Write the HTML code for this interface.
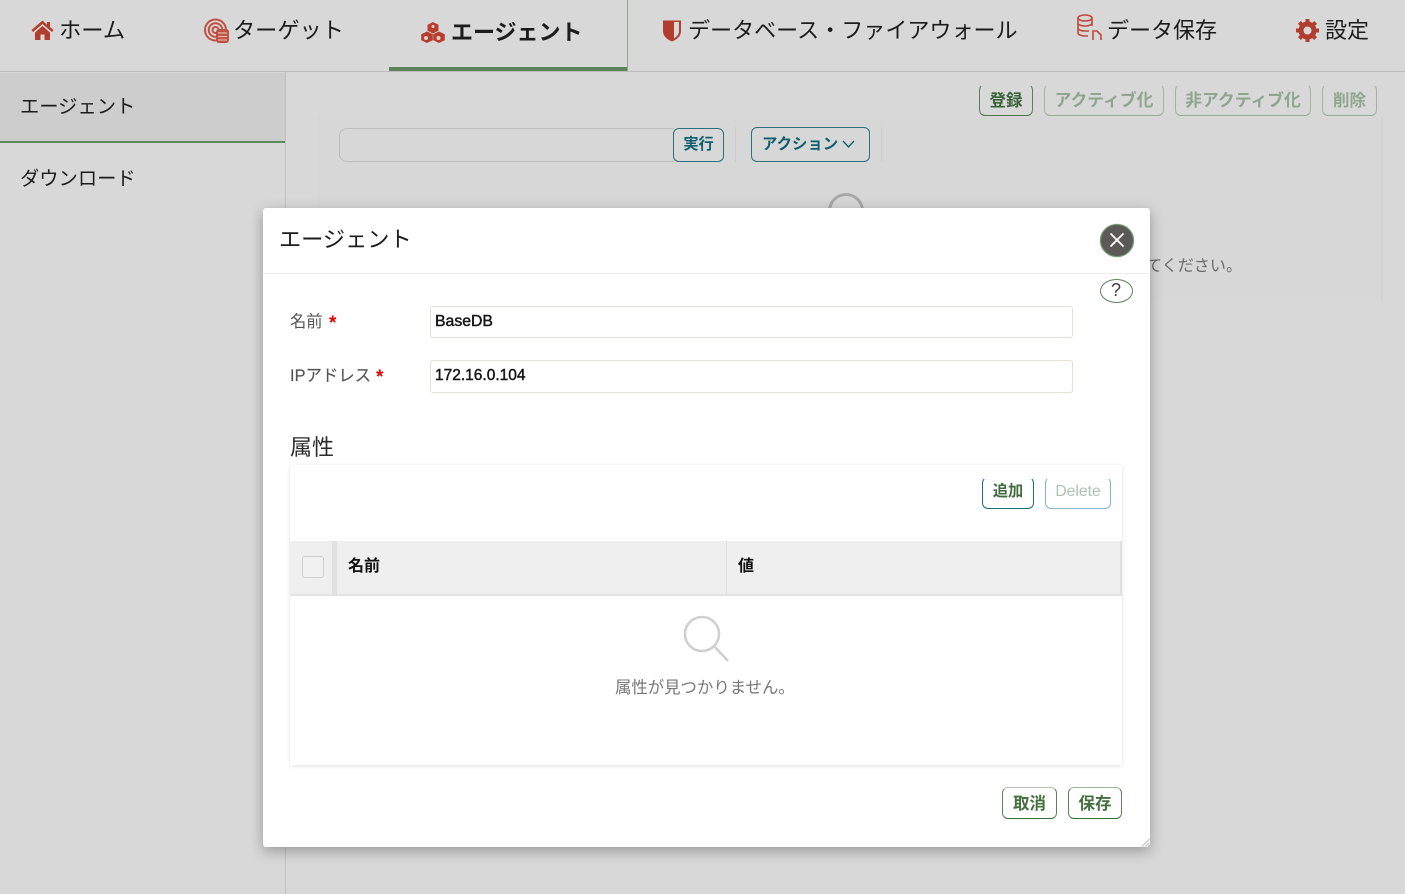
<!DOCTYPE html>
<html lang="ja"><head><meta charset="utf-8"><title>エージェント</title>
<style>
*{box-sizing:border-box}
html,body{margin:0;padding:0}
body{width:1405px;height:894px;overflow:hidden;position:relative;background:#d8d8d8;font-family:"Liberation Sans","Noto Sans CJK JP",sans-serif;color:#1c1c1c}
.t{position:absolute;white-space:nowrap;line-height:1}
.a{position:absolute}
.b{position:absolute;border:1px solid #85a085;border-radius:6px;font:bold 16px/1 "Liberation Sans","Noto Sans CJK JP",sans-serif;text-align:center;white-space:nowrap}
svg{position:absolute;overflow:visible}
</style></head><body>
<!-- nav -->
<div class="a" style="left:0;top:71px;width:1405px;height:1px;background:#bcbcbc"></div>
<div class="a" style="left:389px;top:67px;width:238px;height:4px;background:#5b8259"></div>
<div class="a" style="left:627px;top:0;width:1px;height:71px;background:#8ba58a"></div>
<svg style="left:31px;top:20px" width="23" height="20" viewBox="0 0 23 20"><path fill="#b23d2e" d="M11.500.5L.5 10l1.500 2 9.500-8 9.500 8 1.500-2-3.500-3V2h-3v2.700zM4 12.500L11.500 6 19 12.500V20h-5.500v-5.500h-4V20H4z"/></svg>
<span class="t" style="left:59px;top:20px;font-size:22.300px">ホーム</span>
<svg style="left:204px;top:18px" width="25" height="25" viewBox="0 0 25 25"><g fill="none" stroke="#c0503f" stroke-width="2"><circle cx="11.500" cy="12" r="10.500"/><circle cx="11.500" cy="12" r="6.800"/><circle cx="11.500" cy="12" r="3"/></g><rect x="12" y="11" width="13" height="14" rx="3" fill="#c0503f"/><path d="M14 15h9M14 18.500h9M14 22h9" stroke="#e0b8b0" stroke-width="1.200"/></svg>
<span class="t" style="left:233px;top:20px;font-size:22.200px">ターゲット</span>
<svg style="left:421px;top:22px" width="24" height="21" viewBox="0 0 24 21"><g fill="#b83f30"><path d="M12 0l5.500 2.700v6L12 11.500 6.500 8.700v-6z"/><path d="M6 9.500l5.800 2.700v6L6 21 .2 18.200v-6z"/><path d="M18 9.500l5.800 2.700v6L18 21l-5.800-2.800v-6z"/></g><g fill="#e6cfcb"><circle cx="12" cy="4.500" r="1.500"/><circle cx="5" cy="16" r="2"/><circle cx="17.500" cy="16" r="2"/></g></svg>
<span class="t" style="left:451px;top:22px;font-size:22px;font-weight:bold">エージェント</span>
<svg style="left:662px;top:19px" width="20" height="23" viewBox="0 0 20 23"><path fill="#b23d2e" d="M1 1.500h18V12c0 5-4 8.500-9 10.500C5 20.500 1 17 1 12z"/><path fill="#d8d8d8" d="M12 3h5v9c0 3-2 5.500-5 7.500z"/></svg>
<span class="t" style="left:688px;top:20px;font-size:22.050px">データベース・ファイアウォール</span>
<svg style="left:1077px;top:14px" width="26" height="26" viewBox="0 0 26 26"><g fill="none" stroke="#c0483a" stroke-width="1.600"><ellipse cx="8" cy="4" rx="7" ry="3"/><path d="M1 4v15c0 1.500 3 3 7 3h3M15 4v8M1 9c0 1.700 3 3 7 3s7-1.300 7-3M1 14c0 1.700 3 3 7 3h4"/><path d="M16 26v-9h4l4 4v5"/></g></svg>
<span class="t" style="left:1107px;top:20px;font-size:22px">データ保存</span>
<svg style="left:1296px;top:19px" width="23" height="23" viewBox="0 0 23 23"><circle cx="11.500" cy="11.500" r="6.500" fill="none" stroke="#b23d2e" stroke-width="5"/><g stroke="#b23d2e" stroke-width="4"><path d="M11.500 0v5M11.500 18v5M0 11.500h5M18 11.500h5M3.400 3.400l3.500 3.500M16.100 16.100l3.500 3.500M19.600 3.400l-3.500 3.500M6.900 16.100l-3.500 3.500"/></g></svg>
<span class="t" style="left:1325px;top:20px;font-size:22px">設定</span>
<!-- sidebar -->
<div class="a" style="left:285px;top:72px;width:1px;height:822px;background:#c0c0c0"></div>
<div class="a" style="left:0;top:73px;width:285px;height:68px;background:#cdcdcd"></div>
<div class="a" style="left:0;top:141px;width:285px;height:2px;background:#5f8a5e"></div>
<span class="t" style="left:20px;top:98px;font-size:19.300px">エージェント</span>
<span class="t" style="left:20px;top:170px;font-size:19.300px">ダウンロード</span>
<!-- background content -->
<div class="a" style="left:318px;top:116px;width:1065px;height:184px;background:#d7d7d7;border-right:2px solid #d2d2d2;border-left:1px solid #d4d4d4"></div>
<div class="b" style="left:979px;top:84px;width:54px;height:32px;line-height:32px;font-size:16.500px;color:#3a6238;border-color:transparent #5d7f5b #4d714b">登録</div>
<div class="b" style="left:1044px;top:84px;width:120px;height:32px;line-height:32px;font-size:16.800px;color:#8fa68e;border-color:transparent #a2b4a1 #94aa93">アクティブ化</div>
<div class="b" style="left:1175px;top:84px;width:136px;height:32px;line-height:32px;font-size:16.800px;color:#8fa68e;border-color:transparent #a2b4a1 #94aa93">非アクティブ化</div>
<div class="b" style="left:1322px;top:84px;width:55px;height:32px;line-height:32px;font-size:16.500px;color:#8fa68e;border-color:transparent #a2b4a1 #94aa93">削除</div>
<div class="a" style="left:339px;top:128px;width:340px;height:34px;border:1px solid #bdbdbd;border-radius:8px"></div>
<div class="b" style="left:673px;top:128px;width:51px;height:34px;line-height:31px;font-size:15.200px;color:#0d5f6e;border-color:#2d6e7c;background:#d8d8d8">実行</div>
<div class="a" style="left:735px;top:127px;width:1px;height:35px;background:#cdcdcd"></div>
<div class="b" style="left:751px;top:127px;width:119px;height:35px;line-height:33px;font-size:15.400px;color:#0d5f6e;border-color:#2d6e7c;text-align:left;padding-left:10px">アクション</div>
<svg style="left:842px;top:140px" width="13" height="8" viewBox="0 0 13 8"><path d="M1 1l5.500 6L12 1" fill="none" stroke="#0d5f6e" stroke-width="1.300"/></svg>
<div class="a" style="left:881px;top:127px;width:1px;height:35px;background:#cdcdcd"></div>
<svg style="left:825px;top:190px" width="42" height="20" viewBox="0 0 42 20"><circle cx="21" cy="21" r="16.500" fill="none" stroke="#a8a8a8" stroke-width="3"/></svg>
<span class="t" style="left:1146px;top:258px;font-size:16.100px;color:#6b6b6b">てください。</span>
<!-- modal -->
<div class="a" style="left:263px;top:208px;width:887px;height:639px;background:#fff;border-radius:3px;box-shadow:0 4px 14px rgba(0,0,0,.3)">
</div>
<svg style="left:1141px;top:838px" width="9" height="9" viewBox="0 0 9 9"><path d="M8.500 1L1 8.500M8.500 4.500L4.500 8.500M8.500 7L7 8.500" stroke="#bdbdbd" fill="none"/></svg>
<span class="t" style="left:279px;top:229px;font-size:22.200px">エージェント</span>
<div class="a" style="left:263px;top:273px;width:887px;height:1px;background:#ececec"></div>
<div class="a" style="left:1100px;top:224px;width:34px;height:33px;border-radius:50%;background:#5b5a56;border:1px solid #6f9a6e;box-shadow:0 0 1px #5b8259"></div>
<svg style="left:1109px;top:232px" width="16" height="16" viewBox="0 0 16 16"><path d="M1.500 1.500l13 13M14.500 1.500l-13 13" stroke="#fff" stroke-width="1.800"/></svg>
<div class="a" style="left:1100px;top:279px;width:33px;height:24px;border-radius:50%;border:1px solid #5b8259;background:#fff"></div>
<span class="t" style="left:1111px;top:281px;font-size:18px;color:#404040">?</span>
<span class="t" style="left:290px;top:314px;font-size:16.300px;color:#555">名前</span>
<span class="t" style="left:329px;top:314px;font-size:19px;font-weight:bold;color:#e00000">*</span>
<div class="a" style="left:430px;top:306px;width:643px;height:32px;border:1px solid #e3e0d4;border-radius:3px"></div>
<span class="t" style="left:435px;top:314px;font-size:15.800px;color:#161616;-webkit-text-stroke:.45px #161616">BaseDB</span>
<span class="t" style="left:290px;top:368px;font-size:16.300px;color:#555;letter-spacing:.1px;-webkit-text-stroke:.15px #555">IPアドレス</span>
<span class="t" style="left:376px;top:368px;font-size:19px;font-weight:bold;color:#e00000">*</span>
<div class="a" style="left:430px;top:360px;width:643px;height:33px;border:1px solid #e3e0d4;border-radius:3px"></div>
<span class="t" style="left:435px;top:368px;font-size:15.500px;color:#161616;-webkit-text-stroke:.45px #161616">172.16.0.104</span>
<span class="t" style="left:290px;top:437px;font-size:22px;color:#2a2a2a">属性</span>
<!-- panel -->
<div class="a" style="left:290px;top:465px;width:832px;height:300px;background:#fff;box-shadow:0 1px 4px rgba(0,0,0,.12)"></div>
<div class="b" style="left:982px;top:477px;width:52px;height:32px;line-height:27px;font-size:15.200px;color:#3f6b3d;border-color:transparent #1d6f82 #1d6f82">追加</div>
<div class="b" style="left:1045px;top:477px;width:66px;height:32px;line-height:27px;color:#aec3ad;border-color:transparent #82b8c4 #82b8c4;font-weight:normal;font-size:15.700px">Delete</div>
<div class="a" style="left:290px;top:541px;width:832px;height:55px;background:#efefef;border-bottom:2px solid #e3e3e3;border-right:2px solid #e0e0e0"></div>
<div class="a" style="left:332px;top:541px;width:5px;height:53px;background:#e1e1e1"></div>
<div class="a" style="left:726px;top:541px;width:1px;height:53px;background:#e0e0e0"></div>
<div class="a" style="left:302px;top:556px;width:22px;height:22px;border:1px solid #cfcfcf;border-radius:3px;background:#f1f1f1"></div>
<span class="t" style="left:348px;top:559px;font-size:16px;font-weight:bold;color:#111">名前</span>
<span class="t" style="left:738px;top:559px;font-size:16px;font-weight:bold;color:#111">値</span>
<svg style="left:683px;top:616px" width="46" height="46" viewBox="0 0 46 46"><circle cx="19" cy="18" r="17" fill="none" stroke="#d0d0d0" stroke-width="2.600"/><path d="M31 30l14 15" stroke="#d0d0d0" stroke-width="2.600"/></svg>
<span class="t" style="left:615px;top:680px;font-size:16.400px;color:#777">属性が見つかりません。</span>
<div class="b" style="left:1002px;top:787px;width:55px;height:32px;line-height:32px;font-size:16.500px;color:#44703f;border-color:#b0c2af #5d835b #3f6b3d">取消</div>
<div class="b" style="left:1068px;top:787px;width:54px;height:32px;line-height:32px;font-size:16.500px;color:#44703f;border-color:#9db39c #5d835b #3f6b3d">保存</div>
</body></html>
